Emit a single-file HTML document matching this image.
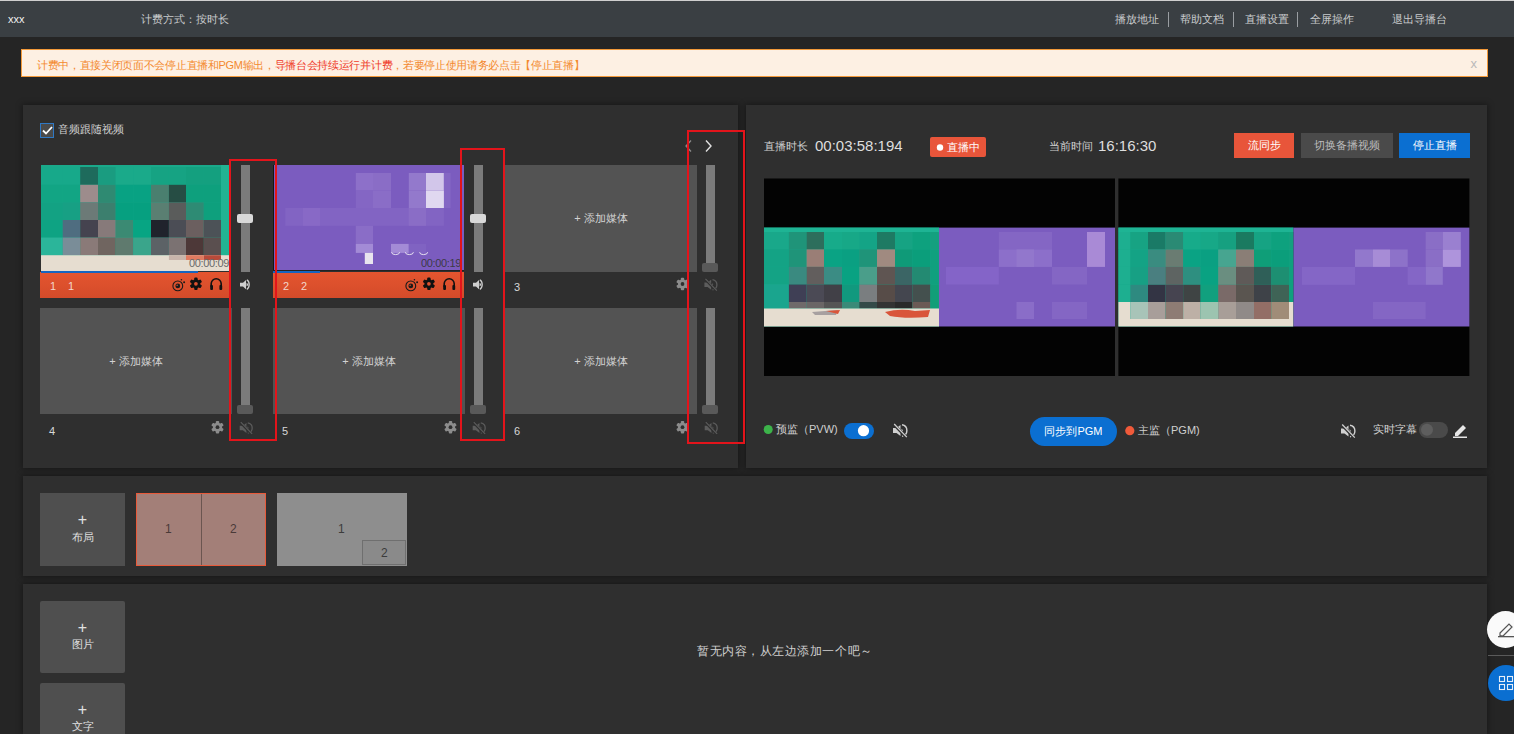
<!DOCTYPE html>
<html><head><meta charset="utf-8">
<style>
*{margin:0;padding:0;box-sizing:border-box}
html,body{width:1514px;height:734px;overflow:hidden;background:#252525;font-family:"Liberation Sans",sans-serif;color:#ccc;font-size:12px}
.a{position:absolute}
#hdr{left:0;top:0;width:1514px;height:37px;background:#3a3f43;border-top:1px solid #cfcfcf}
.ht{position:absolute;top:11px;font-size:11px;color:#c9cbcd;line-height:14px;white-space:nowrap}
.sep{position:absolute;top:11px;width:1px;height:15px;background:#9a9ea2}
#banner{left:21px;top:49px;width:1467px;height:28px;background:#fdf0e3;border:1px solid #f39a3a}
#banner .t{position:absolute;left:15px;top:8.5px;font-size:11px;line-height:13px;color:#f3892f;white-space:nowrap;letter-spacing:-0.32px}
#banner .t b{font-weight:normal;color:#ef3c2a}
.panel{position:absolute;background:#2f2f2f;box-shadow:0 0 6px 1px rgba(0,0,0,.35)}
.gap{position:absolute;background:#212121}
.tile{position:absolute;background:#535353}
.add{position:absolute;left:0;right:0;text-align:center;font-size:11px;color:#d2d2d2;line-height:13px}
.num{position:absolute;font-size:11px;color:#d8d8d8;line-height:13px}
.track{position:absolute;width:9px;background:#7b7b7b}
.thumbw{position:absolute;width:16px;height:9px;background:#d9d9d9;border-radius:2px}
.thumbd{position:absolute;width:16px;height:9px;background:#595959;border-radius:2px}
.redbox{position:absolute;border:2px solid #e3141b}
.btn{position:absolute;color:#fff;font-size:11px;text-align:center;line-height:25px}
.txt{position:absolute;white-space:nowrap;line-height:13px}
svg{position:absolute;overflow:visible}
</style></head><body>
<div id="hdr" class="a">
  <div class="ht" style="left:8px;color:#f0f0f0">xxx</div>
  <div class="ht" style="left:141px">计费方式：按时长</div>
  <div class="ht" style="left:1115px">播放地址</div>
  <div class="sep" style="left:1168px"></div>
  <div class="ht" style="left:1180px">帮助文档</div>
  <div class="sep" style="left:1233px"></div>
  <div class="ht" style="left:1245px">直播设置</div>
  <div class="sep" style="left:1297px"></div>
  <div class="ht" style="left:1310px">全屏操作</div>
  <div class="ht" style="left:1392px">退出导播台</div>
</div>
<div id="banner" class="a">
  <div class="t">计费中，直接关闭页面不会停止直播和PGM输出，<b>导播台会持续运行并计费</b>，若要停止使用请务必点击【停止直播】</div>
  <div class="a" style="right:10px;top:6px;font-size:13px;color:#b9b9b9">x</div>
</div>
<div class="panel" style="left:23px;top:105px;width:715px;height:363px"></div>
<div class="panel" style="left:746px;top:105px;width:741px;height:363px"></div>
<div class="panel" style="left:23px;top:476px;width:1464px;height:100px"></div>
<div class="panel" style="left:23px;top:584px;width:1464px;height:150px"></div>
<div class="a" style="left:40px;top:123px;width:14px;height:15px;border:1px solid #2f78c4;background:#4a4a4a"></div><svg style="left:40px;top:123px" width="14" height="15"><path d="M3,7.5 L6,10.5 L12,4" stroke="#fff" stroke-width="1.8" fill="none"/></svg><div class="txt" style="left:58px;top:123px;font-size:11px;color:#d0d0d0">音频跟随视频</div><svg style="left:683px;top:139px" width="34" height="14"><path d="M8,1.5 L3,7 L8,12.5" stroke="#8a8a8a" stroke-width="1.3" fill="none"/><path d="M23,1.5 L28,7 L23,12.5" stroke="#e0e0e0" stroke-width="1.4" fill="none"/></svg><div class="track" style="left:240.5px;top:165px;height:107px"></div><div class="thumbw" style="left:237px;top:214px"></div><div class="track" style="left:473.5px;top:165px;height:107px"></div><div class="thumbw" style="left:470px;top:214px"></div><div class="track" style="left:705.5px;top:165px;height:107px"></div><div class="thumbd" style="left:702px;top:263px"></div><div class="tile" style="left:505px;top:165px;width:192px;height:107px"><div class="add" style="top:47px">+ 添加媒体</div></div><div class="num" style="left:514px;top:281px">3</div><div class="track" style="left:240.5px;top:308px;height:106px"></div><div class="thumbd" style="left:237px;top:405px"></div><div class="tile" style="left:40px;top:308px;width:192px;height:106px"><div class="add" style="top:47px">+ 添加媒体</div></div><div class="num" style="left:49px;top:425px">4</div><div class="track" style="left:473.5px;top:308px;height:106px"></div><div class="thumbd" style="left:470px;top:405px"></div><div class="tile" style="left:273px;top:308px;width:192px;height:106px"><div class="add" style="top:47px">+ 添加媒体</div></div><div class="num" style="left:282px;top:425px">5</div><div class="track" style="left:705.5px;top:308px;height:106px"></div><div class="thumbd" style="left:702px;top:405px"></div><div class="tile" style="left:505px;top:308px;width:192px;height:106px"><div class="add" style="top:47px">+ 添加媒体</div></div><div class="num" style="left:514px;top:425px">6</div><div class="a" style="left:40px;top:272px;width:191px;height:25.5px;background:linear-gradient(#e4552f,#d44b2a)"></div><div class="num" style="left:50px;top:280px;color:#f3d6ca">1</div><div class="num" style="left:68px;top:280px;color:#f3d6ca">1</div><svg style="left:0;top:0" width="1" height="1"><g transform="translate(177.8,285.9)"><circle r="4.9" stroke="#1a1a1a" stroke-width="1.1" fill="none"/><circle r="2.4" fill="#1a1a1a"/><circle cx="-0.7" cy="-0.7" r="0.7" fill="#e05a3a"/><circle cx="3.6" cy="-6.2" r="0.8" fill="#1a1a1a"/><circle cx="6.3" cy="-3.6" r="1.0" fill="#1a1a1a"/></g><g transform="translate(195.9,283.8)"><rect x="-1.67" y="-6.20" width="3.35" height="12.40" rx="0.93" fill="#111" transform="rotate(0)"/><rect x="-1.67" y="-6.20" width="3.35" height="12.40" rx="0.93" fill="#111" transform="rotate(60)"/><rect x="-1.67" y="-6.20" width="3.35" height="12.40" rx="0.93" fill="#111" transform="rotate(120)"/><circle r="4.46" fill="#111"/><circle r="1.86" fill="#dd5230"/></g><g transform="translate(210,277.8)"><path d="M1.2,9 V6 A5,5 0 0 1 11.2,6 V9" stroke="#111" stroke-width="1.6" fill="none"/><rect x="0.2" y="7.2" width="2.8" height="5" rx="1" fill="#111"/><rect x="9.4" y="7.2" width="2.8" height="5" rx="1" fill="#111"/></g></svg><div class="a" style="left:273px;top:272px;width:191px;height:25.5px;background:linear-gradient(#e4552f,#d44b2a)"></div><div class="num" style="left:283px;top:280px;color:#f3d6ca">2</div><div class="num" style="left:301px;top:280px;color:#f3d6ca">2</div><svg style="left:0;top:0" width="1" height="1"><g transform="translate(410.8,285.9)"><circle r="4.9" stroke="#1a1a1a" stroke-width="1.1" fill="none"/><circle r="2.4" fill="#1a1a1a"/><circle cx="-0.7" cy="-0.7" r="0.7" fill="#e05a3a"/><circle cx="3.6" cy="-6.2" r="0.8" fill="#1a1a1a"/><circle cx="6.3" cy="-3.6" r="1.0" fill="#1a1a1a"/></g><g transform="translate(428.9,283.8)"><rect x="-1.67" y="-6.20" width="3.35" height="12.40" rx="0.93" fill="#111" transform="rotate(0)"/><rect x="-1.67" y="-6.20" width="3.35" height="12.40" rx="0.93" fill="#111" transform="rotate(60)"/><rect x="-1.67" y="-6.20" width="3.35" height="12.40" rx="0.93" fill="#111" transform="rotate(120)"/><circle r="4.46" fill="#111"/><circle r="1.86" fill="#dd5230"/></g><g transform="translate(443,277.8)"><path d="M1.2,9 V6 A5,5 0 0 1 11.2,6 V9" stroke="#111" stroke-width="1.6" fill="none"/><rect x="0.2" y="7.2" width="2.8" height="5" rx="1" fill="#111"/><rect x="9.4" y="7.2" width="2.8" height="5" rx="1" fill="#111"/></g></svg><svg style="left:0;top:0" width="1" height="1"><g transform="translate(239.5,279) scale(1.0)"><path d="M0.5,3.7 H3.5 L6.5,1 V10.2 L3.5,7.6 H0.5 Z" fill="#cfcfcf"/><path d="M7,4 A1.6,1.6 0 0 1 7,7.2 Z" fill="#cfcfcf"/><path d="M7.3,0.8 A3.6,5.1 0 0 1 7.3,10.4" stroke="#cfcfcf" stroke-width="1.3" fill="none"/></g><g transform="translate(472.5,279) scale(1.0)"><path d="M0.5,3.7 H3.5 L6.5,1 V10.2 L3.5,7.6 H0.5 Z" fill="#cfcfcf"/><path d="M7,4 A1.6,1.6 0 0 1 7,7.2 Z" fill="#cfcfcf"/><path d="M7.3,0.8 A3.6,5.1 0 0 1 7.3,10.4" stroke="#cfcfcf" stroke-width="1.3" fill="none"/></g><g transform="translate(703.5,277.5) scale(0.9)"><path d="M1,5.5 H4.5 L8.5,2.5 V13.5 L4.5,10.5 H1 Z" fill="#5c5c5c"/><path d="M9.5,6.3 A1.8,1.8 0 0 1 9.5,9.7 Z" fill="#5c5c5c"/><path d="M10,2.3 A6,5.8 0 0 1 10,13.7" stroke="#5c5c5c" stroke-width="1.4" fill="none"/><path d="M1.5,1.5 L14.5,15" stroke="#2f2f2f" stroke-width="2.8"/><path d="M2.2,1.5 L14.8,14.6" stroke="#5c5c5c" stroke-width="1.3"/></g><g transform="translate(238.8,420.8) scale(0.9)"><path d="M1,5.5 H4.5 L8.5,2.5 V13.5 L4.5,10.5 H1 Z" fill="#5c5c5c"/><path d="M9.5,6.3 A1.8,1.8 0 0 1 9.5,9.7 Z" fill="#5c5c5c"/><path d="M10,2.3 A6,5.8 0 0 1 10,13.7" stroke="#5c5c5c" stroke-width="1.4" fill="none"/><path d="M1.5,1.5 L14.5,15" stroke="#2f2f2f" stroke-width="2.8"/><path d="M2.2,1.5 L14.8,14.6" stroke="#5c5c5c" stroke-width="1.3"/></g><g transform="translate(471.8,420.8) scale(0.9)"><path d="M1,5.5 H4.5 L8.5,2.5 V13.5 L4.5,10.5 H1 Z" fill="#5c5c5c"/><path d="M9.5,6.3 A1.8,1.8 0 0 1 9.5,9.7 Z" fill="#5c5c5c"/><path d="M10,2.3 A6,5.8 0 0 1 10,13.7" stroke="#5c5c5c" stroke-width="1.4" fill="none"/><path d="M1.5,1.5 L14.5,15" stroke="#2f2f2f" stroke-width="2.8"/><path d="M2.2,1.5 L14.8,14.6" stroke="#5c5c5c" stroke-width="1.3"/></g><g transform="translate(703.8,420.8) scale(0.9)"><path d="M1,5.5 H4.5 L8.5,2.5 V13.5 L4.5,10.5 H1 Z" fill="#5c5c5c"/><path d="M9.5,6.3 A1.8,1.8 0 0 1 9.5,9.7 Z" fill="#5c5c5c"/><path d="M10,2.3 A6,5.8 0 0 1 10,13.7" stroke="#5c5c5c" stroke-width="1.4" fill="none"/><path d="M1.5,1.5 L14.5,15" stroke="#2f2f2f" stroke-width="2.8"/><path d="M2.2,1.5 L14.8,14.6" stroke="#5c5c5c" stroke-width="1.3"/></g><g transform="translate(682.5,284)"><rect x="-1.70" y="-6.30" width="3.40" height="12.60" rx="0.94" fill="#8c8c8c" transform="rotate(0)"/><rect x="-1.70" y="-6.30" width="3.40" height="12.60" rx="0.94" fill="#8c8c8c" transform="rotate(60)"/><rect x="-1.70" y="-6.30" width="3.40" height="12.60" rx="0.94" fill="#8c8c8c" transform="rotate(120)"/><circle r="4.54" fill="#8c8c8c"/><circle r="1.89" fill="#2f2f2f"/></g><g transform="translate(217.5,427.2)"><rect x="-1.70" y="-6.30" width="3.40" height="12.60" rx="0.94" fill="#8c8c8c" transform="rotate(0)"/><rect x="-1.70" y="-6.30" width="3.40" height="12.60" rx="0.94" fill="#8c8c8c" transform="rotate(60)"/><rect x="-1.70" y="-6.30" width="3.40" height="12.60" rx="0.94" fill="#8c8c8c" transform="rotate(120)"/><circle r="4.54" fill="#8c8c8c"/><circle r="1.89" fill="#2f2f2f"/></g><g transform="translate(450.5,427.2)"><rect x="-1.70" y="-6.30" width="3.40" height="12.60" rx="0.94" fill="#8c8c8c" transform="rotate(0)"/><rect x="-1.70" y="-6.30" width="3.40" height="12.60" rx="0.94" fill="#8c8c8c" transform="rotate(60)"/><rect x="-1.70" y="-6.30" width="3.40" height="12.60" rx="0.94" fill="#8c8c8c" transform="rotate(120)"/><circle r="4.54" fill="#8c8c8c"/><circle r="1.89" fill="#2f2f2f"/></g><g transform="translate(682.5,427.2)"><rect x="-1.70" y="-6.30" width="3.40" height="12.60" rx="0.94" fill="#8c8c8c" transform="rotate(0)"/><rect x="-1.70" y="-6.30" width="3.40" height="12.60" rx="0.94" fill="#8c8c8c" transform="rotate(60)"/><rect x="-1.70" y="-6.30" width="3.40" height="12.60" rx="0.94" fill="#8c8c8c" transform="rotate(120)"/><circle r="4.54" fill="#8c8c8c"/><circle r="1.89" fill="#2f2f2f"/></g></svg><svg style="left:0;top:0" width="1" height="1"><rect x="41.0" y="165.0" width="190.0" height="106.0" fill="#1aa98a"/><rect x="41.0" y="167.0" width="21.7" height="17.8" fill="#17a98a"/><rect x="62.7" y="167.0" width="17.5" height="17.8" fill="#17a98a"/><rect x="80.2" y="167.0" width="17.8" height="17.8" fill="#1e6b5c"/><rect x="98.0" y="167.0" width="17.7" height="17.8" fill="#1a9c80"/><rect x="115.7" y="167.0" width="17.5" height="17.8" fill="#1aaa8a"/><rect x="133.2" y="167.0" width="17.8" height="17.8" fill="#1aaa8a"/><rect x="151.0" y="167.0" width="17.9" height="17.8" fill="#16a383"/><rect x="168.9" y="167.0" width="17.1" height="17.8" fill="#16a383"/><rect x="186.0" y="167.0" width="17.8" height="17.8" fill="#14a07f"/><rect x="203.8" y="167.0" width="17.2" height="17.8" fill="#14a07f"/><rect x="41.0" y="184.8" width="21.7" height="17.6" fill="#12a584"/><rect x="62.7" y="184.8" width="17.5" height="17.6" fill="#12a584"/><rect x="80.2" y="184.8" width="17.8" height="17.6" fill="#9d8c8c"/><rect x="98.0" y="184.8" width="17.7" height="17.6" fill="#2f8a72"/><rect x="115.7" y="184.8" width="17.5" height="17.6" fill="#08a283"/><rect x="133.2" y="184.8" width="17.8" height="17.6" fill="#08a283"/><rect x="151.0" y="184.8" width="17.9" height="17.6" fill="#4a7f6f"/><rect x="168.9" y="184.8" width="17.1" height="17.6" fill="#264d44"/><rect x="186.0" y="184.8" width="17.8" height="17.6" fill="#0ea07d"/><rect x="203.8" y="184.8" width="17.2" height="17.6" fill="#0ea07d"/><rect x="41.0" y="202.4" width="21.7" height="17.6" fill="#13a283"/><rect x="62.7" y="202.4" width="17.5" height="17.6" fill="#17a084"/><rect x="80.2" y="202.4" width="17.8" height="17.6" fill="#6c7a77"/><rect x="98.0" y="202.4" width="17.7" height="17.6" fill="#3c7f6e"/><rect x="115.7" y="202.4" width="17.5" height="17.6" fill="#06a080"/><rect x="133.2" y="202.4" width="17.8" height="17.6" fill="#06a080"/><rect x="151.0" y="202.4" width="17.9" height="17.6" fill="#5a7f72"/><rect x="168.9" y="202.4" width="17.1" height="17.6" fill="#5a5c5b"/><rect x="186.0" y="202.4" width="17.8" height="17.6" fill="#2e8b74"/><rect x="203.8" y="202.4" width="17.2" height="17.6" fill="#0ea07d"/><rect x="41.0" y="220.0" width="21.7" height="17.6" fill="#0ea383"/><rect x="62.7" y="220.0" width="17.5" height="17.6" fill="#4f6d80"/><rect x="80.2" y="220.0" width="17.8" height="17.6" fill="#45434f"/><rect x="98.0" y="220.0" width="17.7" height="17.6" fill="#877a7a"/><rect x="115.7" y="220.0" width="17.5" height="17.6" fill="#3b8a73"/><rect x="133.2" y="220.0" width="17.8" height="17.6" fill="#07a583"/><rect x="151.0" y="220.0" width="17.9" height="17.6" fill="#20232c"/><rect x="168.9" y="220.0" width="17.1" height="17.6" fill="#4b4d55"/><rect x="186.0" y="220.0" width="17.8" height="17.6" fill="#6b5f5f"/><rect x="203.8" y="220.0" width="17.2" height="17.6" fill="#4c5257"/><rect x="41.0" y="237.6" width="21.7" height="17.6" fill="#2bb59a"/><rect x="62.7" y="237.6" width="17.5" height="17.6" fill="#7a8d98"/><rect x="80.2" y="237.6" width="17.8" height="17.6" fill="#8a7a78"/><rect x="98.0" y="237.6" width="17.7" height="17.6" fill="#706560"/><rect x="115.7" y="237.6" width="17.5" height="17.6" fill="#5f7a6e"/><rect x="133.2" y="237.6" width="17.8" height="17.6" fill="#3aa58b"/><rect x="151.0" y="237.6" width="17.9" height="17.6" fill="#5c6266"/><rect x="168.9" y="237.6" width="17.1" height="17.6" fill="#7b7272"/><rect x="186.0" y="237.6" width="17.8" height="17.6" fill="#4d3838"/><rect x="203.8" y="237.6" width="17.2" height="17.6" fill="#5a4f4f"/><rect x="221.0" y="165.0" width="10.0" height="90.2" fill="#22b393"/><rect x="41.0" y="255.2" width="190.0" height="15.8" fill="#e6ddd0"/><rect x="168.9" y="255.2" width="17.1" height="4.8" fill="#c9b5ab"/><rect x="186.0" y="255.2" width="17.8" height="4.8" fill="#e07a60"/><rect x="203.8" y="255.2" width="17.2" height="4.8" fill="#b84a3a"/><rect x="273.0" y="165.0" width="191.0" height="106.0" fill="#7b5cbf"/><rect x="273.0" y="165.0" width="1.0" height="106.0" fill="#151515"/><rect x="273.0" y="270.0" width="191.0" height="1.0" fill="#222"/><rect x="355.8" y="173.0" width="17.2" height="17.5" fill="#8d70c9"/><rect x="373.0" y="173.0" width="18.0" height="17.5" fill="#8a6dc6"/><rect x="408.8" y="173.0" width="17.2" height="17.5" fill="#9379cc"/><rect x="426.0" y="173.0" width="17.9" height="17.5" fill="#d2c6ea"/><rect x="443.9" y="173.0" width="6.8" height="35.0" fill="#8466c4"/><rect x="355.8" y="190.5" width="17.2" height="17.5" fill="#8466c4"/><rect x="373.0" y="190.5" width="18.0" height="17.5" fill="#8a6dc7"/><rect x="408.8" y="190.5" width="17.2" height="17.5" fill="#9379cc"/><rect x="426.0" y="190.5" width="17.9" height="17.5" fill="#e0d8f0"/><rect x="285.3" y="208.0" width="158.6" height="17.8" fill="#8264c3"/><rect x="303.0" y="208.0" width="17.0" height="17.8" fill="#8869c6"/><rect x="408.8" y="208.0" width="17.2" height="17.8" fill="#8a6dc6"/><rect x="355.8" y="225.8" width="17.2" height="18.1" fill="#8a6dc7"/><rect x="355.8" y="243.9" width="17.2" height="9.0" fill="#a38bd6"/><rect x="391.0" y="243.9" width="17.8" height="9.0" fill="#a38bd6"/><rect x="408.8" y="243.9" width="17.2" height="9.0" fill="#8063c2"/><rect x="364.8" y="252.9" width="8.2" height="11.1" fill="#e8e4ee"/><path d="M391.6,252.2 A4,2.4 0 0 0 399.6,252.2" stroke="#e6e0f0" stroke-width="1" fill="none"/><path d="M405.4,252.2 A4,2.4 0 0 0 413.4,252.2" stroke="#e6e0f0" stroke-width="1" fill="none"/><path d="M419.6,252.2 A4,2.4 0 0 0 427.6,252.2" stroke="#e6e0f0" stroke-width="1" fill="none"/><rect x="41" y="271" width="157" height="2" fill="#1565c0"/><rect x="273" y="271" width="47" height="2" fill="#1565c0"/></svg><div class="txt" style="left:189px;top:257px;font-size:11px;letter-spacing:-0.35px;color:#6a6a6a">00:00:09</div><div class="txt" style="left:421px;top:257px;font-size:11px;letter-spacing:-0.35px;color:#3c3a48">00:00:19</div><div class="redbox" style="left:229px;top:159px;width:48px;height:282px"></div><div class="redbox" style="left:460px;top:148px;width:45px;height:293px"></div><div class="redbox" style="left:687px;top:130px;width:58px;height:314px"></div><div class="txt" style="left:764px;top:140px;font-size:11px;color:#cfcfcf">直播时长</div><div class="txt" style="left:815px;top:137px;font-size:15px;line-height:17px;color:#dedede">00:03:58:194</div><div class="a" style="left:930px;top:137px;width:56px;height:20px;background:#e8553a;border-radius:2px"></div><svg style="left:0;top:0" width="1" height="1"><circle cx="940" cy="147.5" r="3.2" fill="#fff"/></svg><div class="txt" style="left:947px;top:141px;font-size:11px;color:#fff">直播中</div><div class="txt" style="left:1049px;top:140px;font-size:11px;color:#cfcfcf">当前时间</div><div class="txt" style="left:1098px;top:137px;font-size:15px;line-height:17px;color:#dedede">16:16:30</div><div class="btn" style="left:1234px;top:133px;width:60px;height:25px;background:#e8553a">流同步</div><div class="btn" style="left:1301px;top:133px;width:92px;height:25px;background:#4a4a4a;color:#bdbdbd">切换备播视频</div><div class="btn" style="left:1399px;top:133px;width:71px;height:25px;background:#0b6fd1">停止直播</div><svg style="left:0;top:0" width="1" height="1"><rect x="764.0" y="178.5" width="351.0" height="197.5" fill="#030303"/><rect x="764.0" y="227.6" width="175.0" height="98.9" fill="#19a98b"/><rect x="764.0" y="227.6" width="175.0" height="4.4" fill="#1eb494"/><rect x="939.0" y="227.6" width="176.0" height="98.9" fill="#7b5cbf"/><rect x="764.0" y="232.0" width="24.9" height="17.4" fill="#19a88a"/><rect x="788.9" y="232.0" width="17.7" height="17.4" fill="#1f9479"/><rect x="806.6" y="232.0" width="17.4" height="17.4" fill="#2d6e5c"/><rect x="824.0" y="232.0" width="18.0" height="17.4" fill="#17ab8a"/><rect x="842.0" y="232.0" width="17.3" height="17.4" fill="#17a887"/><rect x="859.3" y="232.0" width="17.7" height="17.4" fill="#14a486"/><rect x="877.0" y="232.0" width="18.0" height="17.4" fill="#1e7a63"/><rect x="895.0" y="232.0" width="17.4" height="17.4" fill="#16a383"/><rect x="912.4" y="232.0" width="18.0" height="17.4" fill="#0ea17e"/><rect x="930.4" y="232.0" width="8.4" height="17.4" fill="#14a07f"/><rect x="764.0" y="249.4" width="24.9" height="17.5" fill="#14a385"/><rect x="788.9" y="249.4" width="17.7" height="17.5" fill="#1f9479"/><rect x="806.6" y="249.4" width="17.4" height="17.5" fill="#9a7e76"/><rect x="824.0" y="249.4" width="18.0" height="17.5" fill="#0aa384"/><rect x="842.0" y="249.4" width="17.3" height="17.5" fill="#0aa082"/><rect x="859.3" y="249.4" width="17.7" height="17.5" fill="#1f9479"/><rect x="877.0" y="249.4" width="18.0" height="17.5" fill="#a08a80"/><rect x="895.0" y="249.4" width="17.4" height="17.5" fill="#0f9a78"/><rect x="912.4" y="249.4" width="18.0" height="17.5" fill="#0b9e7b"/><rect x="930.4" y="249.4" width="8.4" height="17.5" fill="#10a07e"/><rect x="764.0" y="266.9" width="24.9" height="17.6" fill="#14a385"/><rect x="788.9" y="266.9" width="17.7" height="17.6" fill="#3a8a80"/><rect x="806.6" y="266.9" width="17.4" height="17.6" fill="#625e5d"/><rect x="824.0" y="266.9" width="18.0" height="17.6" fill="#3b8c84"/><rect x="842.0" y="266.9" width="17.3" height="17.6" fill="#09a282"/><rect x="859.3" y="266.9" width="17.7" height="17.6" fill="#4a9e8a"/><rect x="877.0" y="266.9" width="18.0" height="17.6" fill="#5f5552"/><rect x="895.0" y="266.9" width="17.4" height="17.6" fill="#3b6565"/><rect x="912.4" y="266.9" width="18.0" height="17.6" fill="#238a72"/><rect x="930.4" y="266.9" width="8.4" height="17.6" fill="#10a07e"/><rect x="764.0" y="284.5" width="24.9" height="17.5" fill="#1aa58e"/><rect x="788.9" y="284.5" width="17.7" height="17.5" fill="#3f3f55"/><rect x="806.6" y="284.5" width="17.4" height="17.5" fill="#4b4a55"/><rect x="824.0" y="284.5" width="18.0" height="17.5" fill="#414047"/><rect x="842.0" y="284.5" width="17.3" height="17.5" fill="#11997e"/><rect x="859.3" y="284.5" width="17.7" height="17.5" fill="#7a7e80"/><rect x="877.0" y="284.5" width="18.0" height="17.5" fill="#574c48"/><rect x="895.0" y="284.5" width="17.4" height="17.5" fill="#44464f"/><rect x="912.4" y="284.5" width="18.0" height="17.5" fill="#44504e"/><rect x="930.4" y="284.5" width="8.4" height="17.5" fill="#119e78"/><rect x="764.0" y="302.0" width="24.9" height="6.5" fill="#1aa58e"/><rect x="788.9" y="302.0" width="17.7" height="6.5" fill="#6f6a6a"/><rect x="806.6" y="302.0" width="17.4" height="6.5" fill="#6a6666"/><rect x="824.0" y="302.0" width="18.0" height="6.5" fill="#555555"/><rect x="842.0" y="302.0" width="17.3" height="6.5" fill="#3a8a78"/><rect x="859.3" y="302.0" width="17.7" height="6.5" fill="#334a48"/><rect x="877.0" y="302.0" width="18.0" height="6.5" fill="#333333"/><rect x="895.0" y="302.0" width="17.4" height="6.5" fill="#2a2a2a"/><rect x="912.4" y="302.0" width="18.0" height="6.5" fill="#6b5a55"/><rect x="930.4" y="302.0" width="8.4" height="6.5" fill="#119e78"/><rect x="764.0" y="308.5" width="175.0" height="18.0" fill="#e6ddd0"/><path d="M885,312 Q900,308 915,311 L930,310 L928,317 Q905,319 890,316 Z" fill="#d9553a"/><path d="M812,312 L838,310 L836,315 L815,315 Z" fill="#a7a0a0"/><path d="M826,311 L840,310 L838,314 Z" fill="#d9553a"/><rect x="998.8" y="232.0" width="53.2" height="17.4" fill="#8466c4"/><rect x="1087.0" y="232.0" width="18.0" height="34.9" fill="#a98ad6"/><rect x="998.8" y="249.4" width="53.2" height="17.5" fill="#8c6fca"/><rect x="1016.5" y="249.4" width="17.5" height="17.5" fill="#9277cc"/><rect x="946.0" y="266.9" width="52.8" height="17.6" fill="#8464c8"/><rect x="1052.0" y="266.9" width="35.0" height="17.6" fill="#8466c4"/><rect x="1016.5" y="302.0" width="17.5" height="17.0" fill="#8a6dc8"/><rect x="1052.0" y="302.0" width="35.0" height="17.0" fill="#8466c4"/><rect x="1118.4" y="178.5" width="351.0" height="197.5" fill="#030303"/><rect x="1118.4" y="227.6" width="175.0" height="98.9" fill="#19a98b"/><rect x="1118.4" y="227.6" width="175.0" height="4.4" fill="#1eb494"/><rect x="1293.4" y="227.6" width="176.0" height="98.9" fill="#7b5cbf"/><rect x="1118.4" y="232.0" width="12.0" height="17.5" fill="#1daf90"/><rect x="1130.4" y="232.0" width="17.6" height="17.5" fill="#17a383"/><rect x="1148.0" y="232.0" width="17.5" height="17.5" fill="#1a7a66"/><rect x="1165.5" y="232.0" width="17.7" height="17.5" fill="#2a8a74"/><rect x="1183.2" y="232.0" width="17.4" height="17.5" fill="#17ab8a"/><rect x="1200.6" y="232.0" width="17.6" height="17.5" fill="#17a887"/><rect x="1218.2" y="232.0" width="17.8" height="17.5" fill="#16a080"/><rect x="1236.0" y="232.0" width="18.0" height="17.5" fill="#1a7a60"/><rect x="1254.0" y="232.0" width="17.3" height="17.5" fill="#16a383"/><rect x="1271.3" y="232.0" width="17.7" height="17.5" fill="#0ea17e"/><rect x="1289.0" y="232.0" width="4.2" height="17.5" fill="#14a07f"/><rect x="1118.4" y="249.5" width="12.0" height="17.4" fill="#1daf90"/><rect x="1130.4" y="249.5" width="17.6" height="17.4" fill="#14a385"/><rect x="1148.0" y="249.5" width="17.5" height="17.4" fill="#3a8c80"/><rect x="1165.5" y="249.5" width="17.7" height="17.4" fill="#6a7c72"/><rect x="1183.2" y="249.5" width="17.4" height="17.4" fill="#0aa384"/><rect x="1200.6" y="249.5" width="17.6" height="17.4" fill="#0aa082"/><rect x="1218.2" y="249.5" width="17.8" height="17.4" fill="#47a590"/><rect x="1236.0" y="249.5" width="18.0" height="17.4" fill="#8a7e76"/><rect x="1254.0" y="249.5" width="17.3" height="17.4" fill="#0f9e78"/><rect x="1271.3" y="249.5" width="17.7" height="17.4" fill="#0b9e7b"/><rect x="1289.0" y="249.5" width="4.2" height="17.4" fill="#10a07e"/><rect x="1118.4" y="266.9" width="12.0" height="17.9" fill="#1daf90"/><rect x="1130.4" y="266.9" width="17.6" height="17.9" fill="#17a084"/><rect x="1148.0" y="266.9" width="17.5" height="17.9" fill="#4a7f80"/><rect x="1165.5" y="266.9" width="17.7" height="17.9" fill="#5e6462"/><rect x="1183.2" y="266.9" width="17.4" height="17.9" fill="#2e8f80"/><rect x="1200.6" y="266.9" width="17.6" height="17.9" fill="#09a282"/><rect x="1218.2" y="266.9" width="17.8" height="17.9" fill="#6a8e80"/><rect x="1236.0" y="266.9" width="18.0" height="17.9" fill="#5f5a58"/><rect x="1254.0" y="266.9" width="17.3" height="17.9" fill="#2f5f58"/><rect x="1271.3" y="266.9" width="17.7" height="17.9" fill="#1d8f72"/><rect x="1289.0" y="266.9" width="4.2" height="17.9" fill="#10a07e"/><rect x="1118.4" y="284.8" width="12.0" height="17.2" fill="#1daf90"/><rect x="1130.4" y="284.8" width="17.6" height="17.2" fill="#2e8a80"/><rect x="1148.0" y="284.8" width="17.5" height="17.2" fill="#333444"/><rect x="1165.5" y="284.8" width="17.7" height="17.2" fill="#464450"/><rect x="1183.2" y="284.8" width="17.4" height="17.2" fill="#3f4444"/><rect x="1200.6" y="284.8" width="17.6" height="17.2" fill="#11a07e"/><rect x="1218.2" y="284.8" width="17.8" height="17.2" fill="#7a6a68"/><rect x="1236.0" y="284.8" width="18.0" height="17.2" fill="#5a5550"/><rect x="1254.0" y="284.8" width="17.3" height="17.2" fill="#3e4248"/><rect x="1271.3" y="284.8" width="17.7" height="17.2" fill="#3f6356"/><rect x="1289.0" y="284.8" width="4.2" height="17.2" fill="#10a07e"/><rect x="1118.4" y="302.0" width="12.0" height="17.0" fill="#e6ddd0"/><rect x="1130.4" y="302.0" width="17.6" height="17.0" fill="#a8c4b8"/><rect x="1148.0" y="302.0" width="17.5" height="17.0" fill="#a89e9a"/><rect x="1165.5" y="302.0" width="17.7" height="17.0" fill="#8e7c74"/><rect x="1183.2" y="302.0" width="17.4" height="17.0" fill="#bdb0a6"/><rect x="1200.6" y="302.0" width="17.6" height="17.0" fill="#9cc4b0"/><rect x="1218.2" y="302.0" width="17.8" height="17.0" fill="#a89e98"/><rect x="1236.0" y="302.0" width="18.0" height="17.0" fill="#908a88"/><rect x="1254.0" y="302.0" width="17.3" height="17.0" fill="#936e66"/><rect x="1271.3" y="302.0" width="17.7" height="17.0" fill="#a08c78"/><rect x="1289.0" y="302.0" width="4.2" height="17.0" fill="#e6ddd0"/><rect x="1118.4" y="319.0" width="174.8" height="7.5" fill="#e6ddd0"/><rect x="1425.7" y="232.0" width="17.1" height="17.5" fill="#8a6ec6"/><rect x="1442.8" y="232.0" width="18.0" height="17.5" fill="#9a80d0"/><rect x="1355.0" y="249.5" width="18.0" height="17.4" fill="#9278cc"/><rect x="1373.0" y="249.5" width="17.0" height="17.4" fill="#a78cd6"/><rect x="1390.0" y="249.5" width="17.7" height="17.4" fill="#8d72c9"/><rect x="1425.7" y="249.5" width="17.1" height="17.4" fill="#8a6ec6"/><rect x="1442.8" y="249.5" width="18.0" height="17.4" fill="#ae94dc"/><rect x="1302.0" y="266.9" width="53.0" height="17.9" fill="#8466c6"/><rect x="1407.7" y="266.9" width="18.0" height="17.9" fill="#8466c6"/><rect x="1425.7" y="266.9" width="17.1" height="17.9" fill="#9077cb"/><rect x="1373.0" y="302.0" width="52.7" height="17.0" fill="#8466c4"/></svg><svg style="left:0;top:0" width="1" height="1"><circle cx="768.2" cy="429.5" r="4.5" fill="#3cb34a"/><circle cx="1129.8" cy="430.7" r="4.6" fill="#f05a3a"/></svg><div class="txt" style="left:776px;top:423px;font-size:11px;color:#d0d0d0">预监（PVW)</div><div class="a" style="left:844px;top:422.5px;width:30px;height:16.5px;border-radius:9px;background:#0b6fd1"></div><svg style="left:0;top:0" width="1" height="1"><circle cx="863.5" cy="430.7" r="5.6" fill="#fff"/></svg><svg style="left:0;top:0" width="1" height="1"><g transform="translate(892,422.5) scale(1.0)"><path d="M1,5.5 H4.5 L8.5,2.5 V13.5 L4.5,10.5 H1 Z" fill="#d0d0d0"/><path d="M9.5,6.3 A1.8,1.8 0 0 1 9.5,9.7 Z" fill="#d0d0d0"/><path d="M10,2.3 A6,5.8 0 0 1 10,13.7" stroke="#d0d0d0" stroke-width="1.4" fill="none"/><path d="M1.5,1.5 L14.5,15" stroke="#2f2f2f" stroke-width="2.8"/><path d="M2.2,1.5 L14.8,14.6" stroke="#d0d0d0" stroke-width="1.3"/></g><g transform="translate(1340,423) scale(1.0)"><path d="M1,5.5 H4.5 L8.5,2.5 V13.5 L4.5,10.5 H1 Z" fill="#d0d0d0"/><path d="M9.5,6.3 A1.8,1.8 0 0 1 9.5,9.7 Z" fill="#d0d0d0"/><path d="M10,2.3 A6,5.8 0 0 1 10,13.7" stroke="#d0d0d0" stroke-width="1.4" fill="none"/><path d="M1.5,1.5 L14.5,15" stroke="#2f2f2f" stroke-width="2.8"/><path d="M2.2,1.5 L14.8,14.6" stroke="#d0d0d0" stroke-width="1.3"/></g></svg><div class="btn" style="left:1030px;top:417px;width:87px;height:29px;line-height:29px;border-radius:15px;background:#0b6fd1">同步到PGM</div><div class="txt" style="left:1138px;top:424px;font-size:11px;color:#d0d0d0">主监（PGM)</div><div class="txt" style="left:1373px;top:423px;font-size:11px;color:#d0d0d0">实时字幕</div><div class="a" style="left:1419px;top:422px;width:29px;height:15.5px;border-radius:8px;background:#4a4a4a"></div><svg style="left:0;top:0" width="1" height="1"><circle cx="1427" cy="429.7" r="6" fill="#5e5e5e"/><path d="M1455,433 L1463,425 L1466,428 L1458,436 L1455,436 Z" fill="#e6e6e6"/><rect x="1453" y="436.5" width="14" height="1.5" fill="#e6e6e6"/></svg><div class="a" style="left:40px;top:493px;width:85px;height:73px;background:#4f4f4f"></div><div class="txt" style="left:40px;width:85px;text-align:center;top:512px;font-size:16px;line-height:16px;color:#e0e0e0">+</div><div class="txt" style="left:40px;width:85px;text-align:center;top:531px;font-size:11px;color:#e0e0e0">布局</div><div class="a" style="left:136px;top:493px;width:130px;height:73px;background:#a37f78;border:1px solid #e85a3a"></div><div class="a" style="left:201px;top:494px;width:1px;height:71px;background:#6b5550"></div><div class="txt" style="left:165px;top:523px;font-size:12px;color:#4a3a38">1</div><div class="txt" style="left:230px;top:523px;font-size:12px;color:#4a3a38">2</div><div class="a" style="left:277px;top:493px;width:130px;height:73px;background:#8e8e8e"></div><div class="a" style="left:362px;top:540px;width:44px;height:25px;background:#8a8a8a;border:1px solid #6f6f6f"></div><div class="txt" style="left:338px;top:523px;font-size:12px;color:#3c3c3c">1</div><div class="txt" style="left:381px;top:547px;font-size:12px;color:#3c3c3c">2</div><div class="a" style="left:40px;top:601px;width:85px;height:72px;background:#4f4f4f;border-radius:2px"></div><div class="txt" style="left:40px;width:85px;text-align:center;top:620px;font-size:16px;line-height:16px;color:#e0e0e0">+</div><div class="txt" style="left:40px;width:85px;text-align:center;top:638px;font-size:11px;color:#e0e0e0">图片</div><div class="a" style="left:40px;top:683px;width:85px;height:72px;background:#4f4f4f;border-radius:2px"></div><div class="txt" style="left:40px;width:85px;text-align:center;top:702px;font-size:16px;line-height:16px;color:#e0e0e0">+</div><div class="txt" style="left:40px;width:85px;text-align:center;top:720px;font-size:11px;color:#e0e0e0">文字</div><div class="txt" style="left:697px;top:644px;font-size:12px;line-height:14px;letter-spacing:0.55px;color:#d0d0d0">暂无内容，从左边添加一个吧～</div><div class="a" style="left:1487px;top:610.5px;width:37px;height:37px;border-radius:50%;background:#fafafa"></div><div class="a" style="left:1488px;top:655px;width:26px;height:1px;background:#5a5a5a"></div><div class="a" style="left:1488px;top:664.5px;width:36px;height:36px;border-radius:50%;background:#0b6fd1"></div><svg style="left:0;top:0" width="1" height="1"><path d="M1500,633 L1509,624 L1512,627 L1503,636 L1500,635.5 Z" stroke="#555" stroke-width="1.2" fill="none"/><rect x="1498" y="636" width="16" height="1.3" fill="#555"/><rect x="1499.5" y="676.5" width="5" height="5" stroke="#e8eef8" stroke-width="1.1" fill="none"/><rect x="1507.5" y="676.5" width="5" height="5" stroke="#e8eef8" stroke-width="1.1" fill="none"/><rect x="1499.5" y="684.5" width="5" height="5" stroke="#e8eef8" stroke-width="1.1" fill="none"/><rect x="1507.5" y="684.5" width="5" height="5" stroke="#e8eef8" stroke-width="1.1" fill="none"/></svg>
</body></html>
